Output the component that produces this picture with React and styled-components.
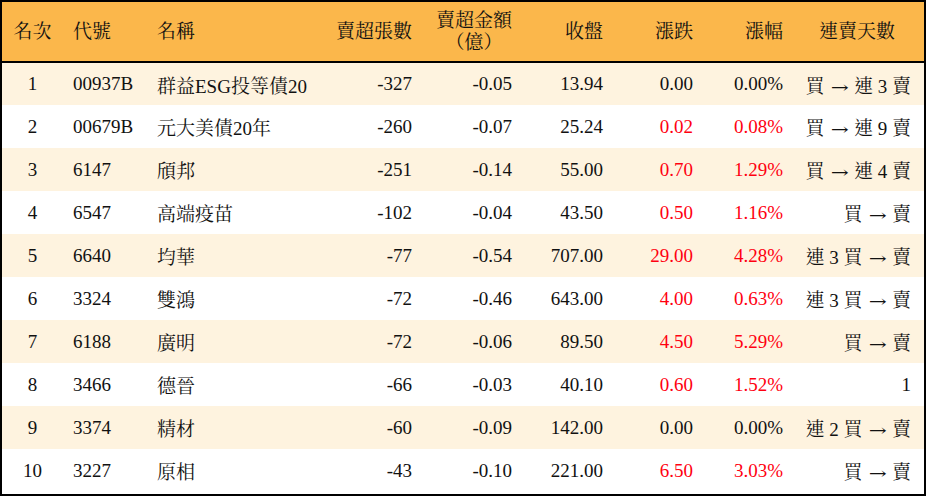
import React from 'react'
import { styled, createGlobalStyle } from 'styled-components'

const GlobalStyle = createGlobalStyle`
    html, body {
        margin: 0;
        padding: 0;
        background: #fff;
    }
    body {
        font-family: "Liberation Serif", "Noto Serif CJK TC", "Noto Sans CJK TC", serif;
        color: #111;
    }
`

const columns = [
    { key: 'rank', label: '名次', width: 61, align: 'center', head: 'center' },
    { key: 'code', label: '代號', width: 84, align: 'left', head: 'left' },
    { key: 'name', label: '名稱', width: 176, align: 'left', head: 'left' },
    { key: 'net', label: '賣超張數', width: 99, align: 'right', head: 'right' },
    { key: 'amount', label: ['賣超金額', '（億）'], width: 100, align: 'right', head: 'right' },
    { key: 'close', label: '收盤', width: 91, align: 'right', head: 'right' },
    { key: 'chg', label: '漲跌', width: 90, align: 'right', head: 'right', colored: true },
    { key: 'pct', label: '漲幅', width: 90, align: 'right', head: 'right', colored: true },
    { key: 'days', label: '連賣天數', width: 131, align: 'right', head: 'center' },
]

const rows = [
    { rank: 1, code: '00937B', name: '群益ESG投等債20', net: '-327', amount: '-0.05', close: '13.94', chg: '0.00', pct: '0.00%', days: '買 → 連 3 賣', up: false },
    { rank: 2, code: '00679B', name: '元大美債20年', net: '-260', amount: '-0.07', close: '25.24', chg: '0.02', pct: '0.08%', days: '買 → 連 9 賣', up: true },
    { rank: 3, code: '6147', name: '頎邦', net: '-251', amount: '-0.14', close: '55.00', chg: '0.70', pct: '1.29%', days: '買 → 連 4 賣', up: true },
    { rank: 4, code: '6547', name: '高端疫苗', net: '-102', amount: '-0.04', close: '43.50', chg: '0.50', pct: '1.16%', days: '買 → 賣', up: true },
    { rank: 5, code: '6640', name: '均華', net: '-77', amount: '-0.54', close: '707.00', chg: '29.00', pct: '4.28%', days: '連 3 買 → 賣', up: true },
    { rank: 6, code: '3324', name: '雙鴻', net: '-72', amount: '-0.46', close: '643.00', chg: '4.00', pct: '0.63%', days: '連 3 買 → 賣', up: true },
    { rank: 7, code: '6188', name: '廣明', net: '-72', amount: '-0.06', close: '89.50', chg: '4.50', pct: '5.29%', days: '買 → 賣', up: true },
    { rank: 8, code: '3466', name: '德晉', net: '-66', amount: '-0.03', close: '40.10', chg: '0.60', pct: '1.52%', days: '1', up: true },
    { rank: 9, code: '3374', name: '精材', net: '-60', amount: '-0.09', close: '142.00', chg: '0.00', pct: '0.00%', days: '連 2 買 → 賣', up: false },
    { rank: 10, code: '3227', name: '原相', net: '-43', amount: '-0.10', close: '221.00', chg: '6.50', pct: '3.03%', days: '買 → 賣', up: true },
]

// the arrow is a full em wide in the reference, so give it its own box
const renderDays = (text) => {
    const parts = text.split('→')
    if (parts.length === 1) return text
    return (
        <>
            {parts[0]}<Arrow><span>→</span></Arrow>{parts[1]}
        </>
    )
}

const App = () => {
    return (
        <Frame>
            <GlobalStyle />
            <Table>
                <colgroup>
                    {columns.map(col => (
                        <col key={col.key} style={{ width: col.width }} />
                    ))}
                </colgroup>
                <thead>
                    <HeadRow>
                        {columns.map(col => (
                            <HeadCell key={col.key} align={col.head}>
                                {Array.isArray(col.label) ? (
                                    <Stack>
                                        {col.label.map(line => <span key={line}>{line}</span>)}
                                    </Stack>
                                ) : col.label}
                            </HeadCell>
                        ))}
                    </HeadRow>
                </thead>
                <tbody>
                    {rows.map((row, i) => (
                        <Row key={row.rank} striped={i % 2 === 0}>
                            {columns.map(col => (
                                <Cell
                                    key={col.key}
                                    align={col.align}
                                    red={col.colored && row.up}
                                >
                                    {col.key === 'days' ? renderDays(row.days) : row[col.key]}
                                </Cell>
                            ))}
                        </Row>
                    ))}
                </tbody>
            </Table>
        </Frame>
    )
}

export default App


const Frame = styled.div`
    width: 926px;
    height: 496px;
    box-sizing: border-box;
    border: 2px solid #000;
    overflow: hidden;
`
const Table = styled.table`
    width: 922px;
    table-layout: fixed;
    border-collapse: collapse;
    border-spacing: 0;
    font-size: 19px;
`
const HeadRow = styled.tr`
    height: 60px;
    background: #fbb74b;
    border-bottom: 2px solid #000;
`
const HeadCell = styled.th`
    font-weight: 400;
    padding: 0 10px;
    text-align: ${({ align }) => align};
    vertical-align: middle;
    line-height: 22px;
    white-space: nowrap;
    color: #111;

    &:last-child{
        padding-right: 13px;
    }
`
const Stack = styled.div`
    display: inline-flex;
    flex-direction: column;
    align-items: center;
`
const Row = styled.tr`
    height: 43px;
    background: ${({ striped }) => striped ? '#fef3df' : '#fff'};
`
const Cell = styled.td`
    padding: 0 10px;
    text-align: ${({ align }) => align};
    vertical-align: middle;
    white-space: nowrap;
    color: ${({ red }) => red ? '#ff0010' : '#111'};

    &:last-child{
        padding-right: 13px;
    }
`
const Arrow = styled.span`
    display: inline-block;
    width: 20px;
    text-align: center;

    span{
        display: inline-block;
        font-family: "DejaVu Serif", serif;
        font-size: 16px;
        transform: scaleX(1.35);
    }
`
